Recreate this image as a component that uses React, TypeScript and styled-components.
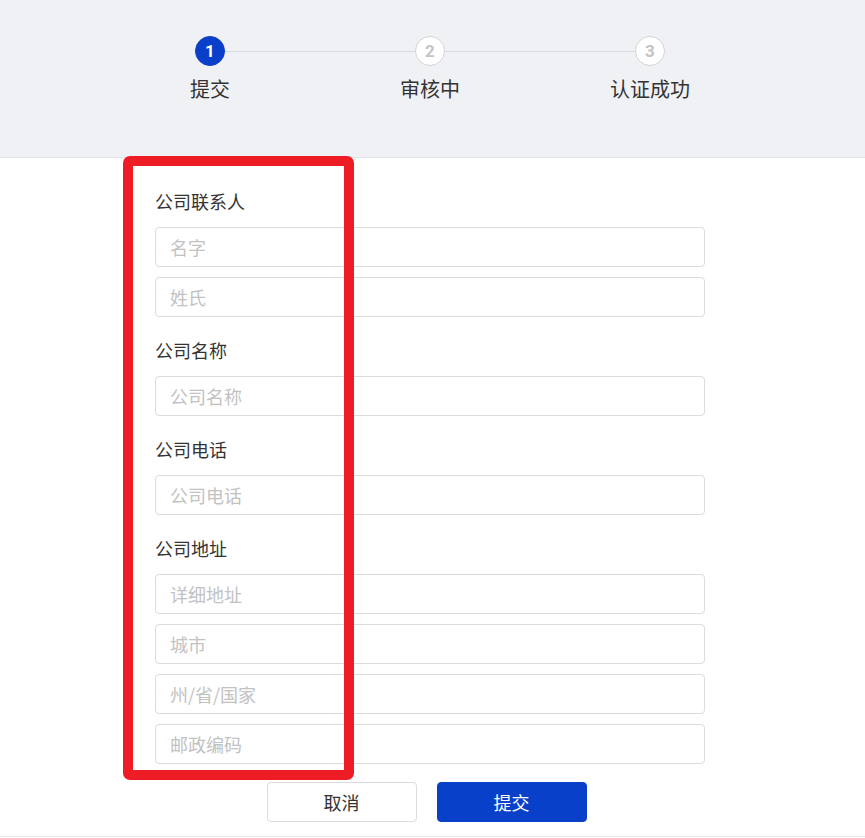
import React from 'react';
import styled, { createGlobalStyle } from 'styled-components';

const GlobalStyle = createGlobalStyle`
  html, body {
    margin: 0;
    padding: 0;
    background: #ffffff;
  }
  body {
    font-family: "Noto Sans CJK SC", "Liberation Sans", sans-serif;
    color: #333333;
  }
  * {
    box-sizing: border-box;
  }
`;

const steps = [
  { num: 1, label: '提交', active: true },
  { num: 2, label: '审核中', active: false },
  { num: 3, label: '认证成功', active: false },
];

const sections = [
  { title: '公司联系人', fields: ['名字', '姓氏'] },
  { title: '公司名称', fields: ['公司名称'] },
  { title: '公司电话', fields: ['公司电话'] },
  { title: '公司地址', fields: ['详细地址', '城市', '州/省/国家', '邮政编码'] },
];

const App = () => {
  return (
    <Page>
      <GlobalStyle />
      <StepsHeader>
        <StepList>
          {steps.map((s, i) => (
            <Step key={s.num} $last={i === steps.length - 1}>
              <StepCircle $active={s.active}>{s.num}</StepCircle>
              <StepLabel>{s.label}</StepLabel>
            </Step>
          ))}
        </StepList>
      </StepsHeader>
      <FormArea>
        <Highlight />
        <Form>
          {sections.map((sec) => (
            <Section key={sec.title}>
              <SectionTitle>{sec.title}</SectionTitle>
              <Fields>
                {sec.fields.map((f) => (
                  <Input key={f} placeholder={f} />
                ))}
              </Fields>
            </Section>
          ))}
          <Actions>
            <Button type="button">取消</Button>
            <Button type="button" $primary>
              提交
            </Button>
          </Actions>
        </Form>
      </FormArea>
    </Page>
  );
};

const Page = styled.div`
  width: 865px;
  min-height: 838px;
`;

const StepsHeader = styled.header`
  height: 158px;
  padding-top: 36px;
  background-color: #f0f1f5;
  border-bottom: 1px solid #e3e4e8;
`;

const StepList = styled.ol`
  display: flex;
  margin: 0;
  padding: 0 0 0 100px;
  list-style: none;
`;

const Step = styled.li<{ $last: boolean }>`
  position: relative;
  display: flex;
  flex-direction: column;
  align-items: center;
  width: 220px;

  &::after {
    content: '';
    display: ${(p) => (p.$last ? 'none' : 'block')};
    position: absolute;
    top: 15px;
    left: calc(50% + 15px);
    width: calc(100% - 30px);
    height: 1px;
    background-color: #d8d9dd;
  }
`;

const StepCircle = styled.span<{ $active: boolean }>`
  display: flex;
  align-items: center;
  justify-content: center;
  width: 30px;
  height: 30px;
  border-radius: 50%;
  font-family: Roboto, "Liberation Sans", sans-serif;
  font-size: 17px;
  font-weight: 700;
  color: ${(p) => (p.$active ? '#ffffff' : '#c4c4c4')};
  background-color: ${(p) => (p.$active ? '#0a3fc9' : '#ffffff')};
  border: 1px solid ${(p) => (p.$active ? '#0a3fc9' : '#d3d3d3')};
`;

const StepLabel = styled.span`
  margin-top: 10px;
  font-size: 20px;
  line-height: 26px;
  color: #333333;
`;

const FormArea = styled.main`
  position: relative;
  padding: 31px 0 14px 155px;
  border-bottom: 1px solid #e8e8e8;
`;

const Highlight = styled.div`
  position: absolute;
  left: 123px;
  top: -2px;
  width: 231px;
  height: 624px;
  border: 10px solid #ee1c25;
  border-radius: 7px;
  pointer-events: none;
  z-index: 2;
`;

const Form = styled.form`
  display: flex;
  flex-direction: column;
  gap: 21px;
  width: 550px;
`;

const Section = styled.section`
  display: flex;
  flex-direction: column;
  gap: 14px;
`;

const SectionTitle = styled.h3`
  margin: 0;
  font-size: 18px;
  font-weight: 400;
  line-height: 24px;
  color: #333333;
`;

const Fields = styled.div`
  display: flex;
  flex-direction: column;
  gap: 10px;
`;

const Input = styled.input`
  width: 100%;
  height: 40px;
  padding: 0 14px 1px;
  font-family: inherit;
  font-size: 18px;
  color: #333333;
  background: #ffffff;
  border: 1px solid #dcdcdc;
  border-radius: 4px;
  outline: none;

  &::placeholder {
    color: #c2c2c2;
  }
`;

const Actions = styled.div`
  display: flex;
  justify-content: center;
  gap: 20px;
  margin-top: -3px;
  padding-right: 7px;
`;

const Button = styled.button<{ $primary?: boolean }>`
  width: 150px;
  height: 40px;
  font-family: inherit;
  font-size: 18px;
  border-radius: 4px;
  cursor: pointer;
  color: ${(p) => (p.$primary ? '#ffffff' : '#333333')};
  background-color: ${(p) => (p.$primary ? '#0840c9' : '#ffffff')};
  border: 1px solid ${(p) => (p.$primary ? '#0840c9' : '#dcdcdc')};
`;

export default App;
